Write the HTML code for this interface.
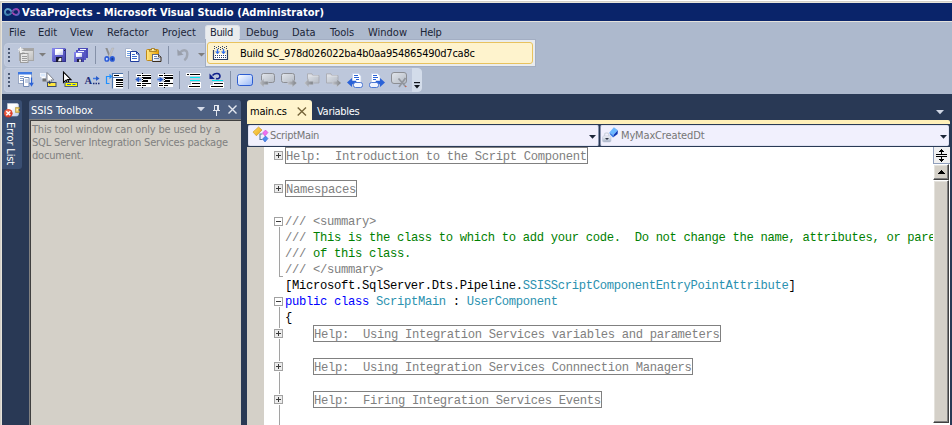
<!DOCTYPE html>
<html>
<head>
<meta charset="utf-8">
<title>VstaProjects - Microsoft Visual Studio (Administrator)</title>
<style>
*{box-sizing:border-box;margin:0;padding:0}
html,body{width:952px;height:425px;overflow:hidden}
body{position:relative;background:#d4d0c8;font-family:"DejaVu Sans Condensed","Liberation Sans",sans-serif;font-size:11px;color:#000}
.abs{position:absolute}
svg{position:absolute;overflow:visible}
#title{left:2px;top:3px;width:950px;height:18px;background:#0a246a}
#title .t{left:20px;top:2px;color:#fff;font-weight:bold;font-size:11px;line-height:16px;white-space:nowrap;letter-spacing:0.02px}
#hl{left:2px;top:21px;width:950px;height:1px;background:#e4e2dc}
#chrome{left:2px;top:22px;width:950px;height:72px;background:#adb9cd}
.mi{top:26px;height:14px;line-height:14px;color:#1b2537;white-space:nowrap}
#buildtab{left:205px;top:25px;width:35px;height:16px;background:#e9ecee;border-radius:3px 3px 0 0;border:1px solid #dde1e9;border-bottom:none}
#drop{left:205px;top:39px;width:331px;height:28px;background:#e9ecee;border:1px solid #a3aec3}
#dropitem{left:207px;top:42px;width:326px;height:22px;background:#fef3cd;border:1px solid #e8c25e;border-radius:3px}
#dropitem .t{left:32px;top:4px;line-height:14px;white-space:nowrap;color:#000;letter-spacing:-0.25px}
.tb{background:#bdc7db;border-radius:4px;border:1px solid #c5cee0}
.sep{width:1px;height:18px;background:#8591a8}
.grip{width:2px;height:2px;background:#4a5872}
#dark{left:2px;top:94px;width:950px;height:331px;background:#293955}
#errtab{left:2px;top:100px;width:20px;height:69px;background:#3a4f73;border-radius:0 3px 3px 0}
#errtab .t{color:#fff;white-space:nowrap;transform-origin:0 0;transform:rotate(90deg);left:15px;top:22px;line-height:13px;letter-spacing:-0.15px}
#tbh{left:29px;top:100px;width:212px;height:20px;background:#4d6082;border-radius:3px 3px 0 0}
#tbh .t{left:2px;top:4px;color:#fff;line-height:14px;white-space:nowrap}
#tbc{left:29px;top:119px;width:212px;height:306px;background:#d4d0c8;border-left:1px solid #808080;border-top:1px solid #808080}
#tbc .in{left:0;top:0;right:0;bottom:0;border-left:1px solid #404040;border-top:1px solid #404040}
#tbc .t{left:2px;top:3px;color:#808080;line-height:13px;white-space:nowrap;letter-spacing:-0.17px}
#tabact{left:247px;top:100px;width:65px;height:21px;background:#fff4cc;border-radius:3px 3px 0 0}
#tabact .t{left:3px;top:5px;line-height:14px;letter-spacing:-0.25px}
#tabvar{left:317px;top:105px;color:#fff;line-height:14px;letter-spacing:-0.3px}
#ystrip{left:247px;top:120px;width:703px;height:4px;background:#fff0b9;border-radius:0 2px 0 0}
.dd{top:125px;height:21px;background:#f1f0fd;border:1px solid #dfe2f1;border-radius:2px;color:#767676}
.dd .t{top:3px;line-height:14px;white-space:nowrap}
#edmargin{left:247px;top:147px;width:17px;height:278px;background:#d4d0c8}
#ed{left:264px;top:147px;width:669px;height:278px;background:#fff;overflow:hidden}
#sb{left:933px;top:147px;width:17px;height:278px;background:#fff}
.btn3d{background:#d4d0c8;border-top:1px solid #fff;border-left:1px solid #fff;border-right:1px solid #404040;border-bottom:1px solid #404040;box-shadow:inset -1px -1px 0 #808080,inset 1px 1px 0 #e4e2dc}
.code{font-family:"Liberation Mono","DejaVu Sans Mono",monospace;font-size:12.2px;letter-spacing:-0.321px;white-space:pre;line-height:16px;height:16px;left:21px}
.g{color:#808080}.gr{color:#008000}.b{color:#0000ff}.c{color:#2b91af}
.box{position:absolute;border:1px solid #808080;height:17px}
.pm{position:absolute;left:10px;width:9px;height:9px;border:1px solid #a2a2a2;background:#fff}
.pm.p{background:#ececec}
.pm i{position:absolute;left:1px;top:3px;width:5px;height:1px;background:#3a3a3a}
.pm b{position:absolute;left:3px;top:1px;width:1px;height:5px;background:#3a3a3a}
.vl{position:absolute;left:15px;width:1px;background:#a2a2a2}
</style>
</head>
<body>
<div class="abs" style="left:0;top:0;width:952px;height:1px;background:#fff"></div>
<div class="abs" style="left:1px;top:2px;width:951px;height:1px;background:#e8e5db"></div>
<div class="abs" style="left:1px;top:2px;width:1px;height:423px;background:#e6e3da"></div>
<div id="title" class="abs"><div class="t abs">VstaProjects - Microsoft Visual Studio (Administrator)</div></div>
<div id="hl" class="abs"></div>
<div id="chrome" class="abs"></div>

<!--TOOLBARS-->
<div class="tb abs" style="left:4px;top:43px;width:215px;height:24px"></div>
<div class="tb abs" style="left:4px;top:68px;width:418px;height:24px;background:#d3dcea;border-color:#d3dcea"></div>
<div class="tb abs" style="left:4px;top:68px;width:408px;height:24px;border-radius:4px 0 0 4px;border-right:none"></div>
<!--ICONS-START-->
<!-- title icon -->
<svg style="left:4px;top:8px" width="16" height="8" viewBox="0 0 16 8">
<defs><linearGradient id="gp" x1="0" y1="0" x2="1" y2="1"><stop offset="0" stop-color="#7a50c8"/><stop offset="0.550" stop-color="#b440ac"/><stop offset="1" stop-color="#3c70c8"/></linearGradient>
<linearGradient id="gt" x1="0" y1="0" x2="0" y2="1"><stop offset="0" stop-color="#64a4cc"/><stop offset="1" stop-color="#3c80b0"/></linearGradient></defs>
<path d="M8 4C6.600 1.900 5.300 1 4 1C2.200 1 1 2.400 1 4C1 5.600 2.200 7 4 7C5.300 7 6.600 6.100 8 4" fill="none" stroke="url(#gt)" stroke-width="1.900"/>
<path d="M8 4C9.400 6.100 10.700 7 12 7C13.800 7 15 5.600 15 4C15 2.400 13.800 1 12 1C10.700 1 9.400 1.900 8 4" fill="none" stroke="url(#gp)" stroke-width="1.900"/>
<path d="M4.500 6.200L11.500 1.800" stroke="#2c5c80" stroke-width="1" opacity="0.800"/>
</svg>

<!-- toolbar grips -->
<div class="grip abs" style="left:8px;top:48px"></div><div class="grip abs" style="left:8px;top:52px"></div><div class="grip abs" style="left:8px;top:56px"></div><div class="grip abs" style="left:8px;top:60px"></div>
<div class="grip abs" style="left:8px;top:73px"></div><div class="grip abs" style="left:8px;top:77px"></div><div class="grip abs" style="left:8px;top:81px"></div><div class="grip abs" style="left:8px;top:85px"></div>

<!-- TB1: new project (disabled) -->
<svg style="left:18px;top:47px" width="16" height="16" viewBox="0 0 16 16">
<defs><linearGradient id="gg1" x1="0" y1="0" x2="1" y2="1"><stop offset="0" stop-color="#fafafa"/><stop offset="1" stop-color="#bcbcbc"/></linearGradient></defs>
<rect x="1.500" y="1.500" width="14" height="12" fill="url(#gg1)" stroke="#a6a6a6"/>
<rect x="2" y="2" width="13" height="2" fill="#a4a4a4"/>
<rect x="2.500" y="6.500" width="7.500" height="9" fill="#e8e8e8" stroke="#9c9c9c"/>
<path d="M4 7.500v-1.500h2.500v1" fill="none" stroke="#8c8c8c" stroke-width="0.800"/>
<g shape-rendering="crispEdges" fill="#9c9c9c"><rect x="4" y="9" width="5" height="1"/><rect x="4" y="11" width="5" height="1"/><rect x="4" y="13" width="5" height="1"/></g>
<path d="M2.500 0v5.500M0 2.700h5.500M0.800 1l3.600 3.600M4.400 1l-3.600 3.600" stroke="#f4f4f4" stroke-width="1"/>
</svg>
<svg style="left:39px;top:53px" width="7" height="4" viewBox="0 0 7 4"><path d="M0 0h7L3.5 3.6z" fill="#7d7d7d"/></svg>

<!-- TB1: save -->
<svg style="left:52px;top:48px" width="14" height="14" viewBox="0 0 14 14">
<defs><linearGradient id="gs" x1="0" y1="0" x2="1" y2="1"><stop offset="0" stop-color="#8a8af0"/><stop offset="1" stop-color="#3a3aa4"/></linearGradient>
<linearGradient id="gw" x1="0" y1="0" x2="1" y2="1"><stop offset="0.400" stop-color="#ffffff"/><stop offset="1" stop-color="#bcc4ec"/></linearGradient></defs>
<path d="M0 0h13l1 1v13H1l-1-1z" fill="url(#gs)"/>
<path d="M13.500 1v12.500h-12" fill="none" stroke="#2c2c84" stroke-width="0.800"/>
<rect x="3" y="1" width="8" height="6" fill="url(#gw)"/>
<rect x="12" y="2" width="1" height="1" fill="#20203c"/>
<rect x="4" y="9" width="6" height="5" fill="#181830"/>
<path d="M7 10.500L9.300 9.700V13.300H6z" fill="#f4f4f4"/>
</svg>

<!-- TB1: save all -->
<svg style="left:74px;top:48px" width="14" height="14" viewBox="0 0 14 14">
<rect x="4" y="0" width="10" height="10" fill="#4a4ab8"/><rect x="6" y="1" width="6" height="1.6" fill="#f0f0ff"/>
<rect x="2" y="2" width="10" height="10" fill="#5656c4"/><rect x="4" y="3" width="6" height="1.6" fill="#f0f0ff"/>
<rect x="0" y="4" width="10" height="10" fill="url(#gs)"/><rect x="2" y="5" width="6" height="4" fill="url(#gw)"/>
<rect x="3" y="11" width="4.5" height="3" fill="#20203c"/><rect x="5" y="11.5" width="2" height="2.2" fill="#e8e8e8"/>
</svg>
<div class="sep abs" style="left:95px;top:46px"></div>

<!-- TB1: cut -->
<svg style="left:104px;top:48px" width="11" height="14" viewBox="0 0 11 14">
<path d="M1.300 0L3.400 0 6.700 8.300 5 9.200z" fill="#8e8e8e"/><path d="M9.900 0L7.800 0 4.500 8.300 6.200 9.200z" fill="#c4c4c4" stroke="#9c9c9c" stroke-width="0.300"/>
<ellipse cx="2.900" cy="10.900" rx="2.600" ry="2.900" fill="#2c5cd8"/><ellipse cx="2.800" cy="11.100" rx="1" ry="1.300" fill="#cfe0ff"/>
<ellipse cx="8.300" cy="10.900" rx="2.600" ry="2.900" fill="#2c5cd8"/><ellipse cx="8.400" cy="11.100" rx="1" ry="1.300" fill="#173c98"/>
</svg>

<!-- TB1: copy -->
<svg style="left:124px;top:48px" width="16" height="14" viewBox="0 0 16 14">
<path d="M1.500 0.500h5l2 2v7h-7z" fill="#fff" stroke="#a8b4cc"/>
<g shape-rendering="crispEdges" fill="#6c9ce0"><rect x="3" y="3" width="3" height="1"/><rect x="3" y="5" width="4" height="1"/><rect x="3" y="7" width="4" height="1"/></g>
<path d="M6.500 3.500h6l2.500 2.500v7.500h-8.500z" fill="#fff" stroke="#1e3c9c"/>
<path d="M12.500 3.500v2.500h2.500" fill="none" stroke="#1e3c9c"/>
<g shape-rendering="crispEdges" fill="#3c6cd0"><rect x="8" y="6" width="3" height="1"/><rect x="8" y="8" width="5" height="1"/><rect x="8" y="10" width="5" height="1"/></g>
</svg>

<!-- TB1: paste -->
<svg style="left:146px;top:48px" width="16" height="14" viewBox="0 0 16 14">
<defs><linearGradient id="gy" x1="0" y1="0" x2="1" y2="0"><stop offset="0" stop-color="#ffe98a"/><stop offset="1" stop-color="#eaa000"/></linearGradient>
<linearGradient id="gpg" x1="0" y1="0" x2="1" y2="1"><stop offset="0.300" stop-color="#ffffff"/><stop offset="1" stop-color="#b4c0d8"/></linearGradient></defs>
<rect x="0.500" y="1.500" width="12" height="11" rx="1" fill="url(#gy)" stroke="#c08818"/>
<path d="M3.500 3.500v-1.500h2v-1.500h3v1.500h2v1.500z" fill="#f8e08a" stroke="#9c7418" stroke-width="0.800"/>
<rect x="6" y="1.200" width="1.200" height="1" fill="#fff8d8"/>
<path d="M6.500 6.500h6l2.500 2.500v4.500h-8.500z" fill="url(#gpg)" stroke="#3a2c1c"/>
<g shape-rendering="crispEdges" fill="#6c84b4"><rect x="8" y="8" width="3" height="1"/><rect x="8" y="10" width="5" height="1"/></g>
<path d="M6.500 13v-6.500h6l2 2" fill="none" stroke="#5c6c8c"/>
<path d="M12.500 6.500v2.500h2.500" fill="none" stroke="#3a2c1c" stroke-width="0.800"/>
</svg>
<div class="sep abs" style="left:168px;top:46px"></div>

<!-- TB1: undo (disabled) -->
<svg style="left:177px;top:48px" width="12" height="13" viewBox="0 0 12 13">
<path d="M3 4.500C6.500 0.800 10.300 2.200 10.300 6C10.300 9 9 11 7.300 12.200" fill="none" stroke="#a0a6b2" stroke-width="2.400"/>
<path d="M0.200 1.200L0.600 7.800 6.600 6.800z" fill="#989eaa"/>
</svg>
<svg style="left:198px;top:53px" width="7" height="4" viewBox="0 0 7 4"><path d="M0 0h7L3.500 3.600z" fill="#7d7d7d"/></svg>
<!-- TB2: icon1 -->
<svg style="left:18px;top:72px" width="16" height="15" viewBox="0 0 16 15">
<rect x="0.500" y="0.500" width="13" height="11" fill="#fff" stroke="#9aa8c4"/>
<rect x="0" y="0" width="14" height="2.500" fill="#3c78e4"/>
<path d="M2 4.500h4M2 6.500h4M2 8.500h3" stroke="#8aa0c8" stroke-width="1"/>
<path d="M6.500 5.500h4.500v9h-5.500v-8z" fill="#fff" stroke="#7088b4"/>
<path d="M7 8h3M7 10h3" stroke="#8aa0c8" stroke-width="1"/>
<path d="M13.500 5.500v6" stroke="#2a62d8" stroke-width="1.300"/><path d="M11.200 10.800h4.600l-2.300 4z" fill="#2a62d8"/>
</svg>
<!-- TB2: icon2 -->
<svg style="left:40px;top:72px" width="17" height="15" viewBox="0 0 17 15">
<rect x="0.500" y="1.500" width="5" height="3" fill="#d8e8fc" stroke="#f4f8ff" stroke-width="0.800"/>
<rect x="1.500" y="5" width="4" height="1.500" fill="#fff"/>
<rect x="2.500" y="6.500" width="3.500" height="3" fill="#707070"/>
<path d="M7 0.500v10l2.300-2 1.500 3.300 1.600-0.700-1.500-3.200h3z" fill="#fff" stroke="#6c7078" stroke-width="0.800"/>
<rect x="7.500" y="10.500" width="8.500" height="4" fill="#ffe640" stroke="#3c4c6c"/>
<path d="M9.800 9v3" stroke="#2c3c5c" stroke-width="1.200"/>
</svg>
<!-- TB2: icon3 -->
<svg style="left:62px;top:71px" width="17" height="16" viewBox="0 0 17 16">
<path d="M1.500 1v10.500l2.600-2.300 1.700 3.600 1.500-0.700-1.700-3.500h3.400z" fill="#fff" stroke="#000" stroke-width="1.100"/>
<rect x="3" y="11.500" width="12.500" height="4" fill="#ffff00" stroke="#4c5c74"/>
<path d="M5 13.500h4M10.500 13.500h3" stroke="#2a62d8" stroke-width="1"/>
</svg>
<!-- TB2: icon4 A-> -->
<svg style="left:85px;top:75px" width="15" height="10" viewBox="0 0 15 10">
<text x="-0.500" y="8.500" font-family="Liberation Serif,serif" font-weight="bold" font-size="10.500" fill="#1c2c78">A</text>
<path d="M8 3.500h4" stroke="#3c78e4" stroke-width="1.500"/><path d="M11 1l3.500 2.500L11 6z" fill="#2a5cc8"/>
<path d="M8 8.500h1.500M10.500 8.500h1.500M13 8.500h1.500" stroke="#1c2c78" stroke-width="1.400"/>
</svg>
<!-- TB2: icon5 -->
<svg style="left:106px;top:73px" width="17" height="16" viewBox="0 0 17 16">
<path d="M4 3.500h-3.500v7h3" fill="none" stroke="#1e90ff" stroke-width="1.200"/><path d="M3.500 0.800l3 2.700-3 2.700z" fill="#1e90ff"/>
<rect x="6.500" y="0.500" width="10.500" height="15" fill="#fff"/><path d="M6.500 15.500v-15h10.500" fill="none" stroke="#4a72a8" stroke-width="1.200"/>
<g shape-rendering="crispEdges"><rect x="8" y="2" width="5" height="1" fill="#000"/><rect x="7" y="4" width="10" height="1" fill="#5a80b4"/>
<rect x="10" y="6" width="7" height="1.500" fill="#000"/><rect x="10" y="9" width="7" height="1" fill="#000"/><rect x="10" y="11" width="7" height="1" fill="#000"/><rect x="10" y="13" width="7" height="1" fill="#000"/></g>
</svg>
<div class="sep abs" style="left:128px;top:71px"></div>
<!-- TB2: outdent -->
<svg style="left:135px;top:72px" width="16" height="16" viewBox="0 0 16 16" shape-rendering="crispEdges">
<g fill="#fff"><rect x="1" y="2" width="6" height="3"/><rect x="7" y="2" width="9" height="13"/><rect x="1" y="10" width="6" height="5"/></g>
<g fill="#000"><rect x="2" y="3" width="4" height="1"/><rect x="8" y="3" width="8" height="1"/><rect x="8" y="5" width="8" height="2"/><rect x="8" y="8" width="5" height="2"/><rect x="2" y="11" width="4" height="1"/><rect x="8" y="11" width="8" height="1"/><rect x="2" y="13" width="4" height="1"/><rect x="8" y="13" width="3" height="1"/>
<rect x="7" y="1" width="1" height="1"/><rect x="7" y="3" width="1" height="1"/><rect x="7" y="5" width="1" height="1"/><rect x="7" y="7" width="1" height="1"/><rect x="7" y="9" width="1" height="1"/><rect x="7" y="11" width="1" height="1"/><rect x="7" y="13" width="1" height="1"/><rect x="7" y="15" width="1" height="1"/></g>
<g shape-rendering="auto"><path d="M2.500 7.500h3.500" stroke="#3c78e4" stroke-width="1.600"/><path d="M4 4.800L0.200 7.500 4 10.200z" fill="#2a5cc8"/></g>
</svg>
<!-- TB2: indent -->
<svg style="left:157px;top:72px" width="16" height="16" viewBox="0 0 16 16" shape-rendering="crispEdges">
<g fill="#fff"><rect x="1" y="2" width="6" height="3"/><rect x="7" y="2" width="9" height="13"/><rect x="1" y="10" width="6" height="5"/></g>
<g fill="#000"><rect x="2" y="3" width="4" height="1"/><rect x="8" y="3" width="8" height="1"/><rect x="8" y="5" width="8" height="2"/><rect x="8" y="8" width="5" height="2"/><rect x="2" y="11" width="4" height="1"/><rect x="8" y="11" width="8" height="1"/><rect x="2" y="13" width="4" height="1"/><rect x="8" y="13" width="3" height="1"/>
<rect x="7" y="1" width="1" height="1"/><rect x="7" y="3" width="1" height="1"/><rect x="7" y="5" width="1" height="1"/><rect x="7" y="7" width="1" height="1"/><rect x="7" y="9" width="1" height="1"/><rect x="7" y="11" width="1" height="1"/><rect x="7" y="13" width="1" height="1"/><rect x="7" y="15" width="1" height="1"/></g>
<g shape-rendering="auto"><path d="M0.300 7.500h3.500" stroke="#3c78e4" stroke-width="1.600"/><path d="M2.600 4.800L6.400 7.500 2.600 10.200z" fill="#2a5cc8"/></g>
</svg>
<div class="sep abs" style="left:179px;top:71px"></div>
<!-- TB2: comment -->
<svg style="left:186px;top:73px" width="15" height="15" viewBox="0 0 15 15" shape-rendering="crispEdges">
<g fill="#fff"><rect x="0" y="0" width="15" height="3"/><rect x="5" y="9" width="10" height="3"/><rect x="2" y="12" width="13" height="3"/></g>
<g fill="#000"><rect x="1" y="1" width="2" height="1"/><rect x="4" y="1" width="10" height="1"/><rect x="6" y="10" width="8" height="1"/><rect x="3" y="13" width="11" height="1"/></g>
<g fill="#00e8f0"><rect x="4" y="4" width="10" height="1"/><rect x="4" y="7" width="10" height="1"/></g>
</svg>
<!-- TB2: uncomment -->
<svg style="left:209px;top:72px" width="15" height="16" viewBox="0 0 15 16">
<g fill="#fff" shape-rendering="crispEdges"><rect x="4" y="10" width="11" height="3"/><rect x="1" y="13" width="14" height="3"/></g>
<path d="M3.500 3.500C6 0.500 11 1 11 4.300C11 6.500 8.500 7 7 6.500" fill="none" stroke="#10208c" stroke-width="1.600"/>
<path d="M0.500 1.500v5.500h5.300z" fill="#10208c"/>
<g shape-rendering="crispEdges"><rect x="3" y="8" width="11" height="1" fill="#00e8f0"/><rect x="5" y="11" width="9" height="1" fill="#000"/><rect x="2" y="14" width="12" height="1" fill="#000"/></g>
</svg>
<div class="sep abs" style="left:230px;top:71px"></div>
<!-- TB2: bookmark -->
<svg style="left:237px;top:74px" width="16" height="12" viewBox="0 0 16 12">
<defs><linearGradient id="gb" x1="0" y1="0" x2="1" y2="1"><stop offset="0" stop-color="#ffffff"/><stop offset="1" stop-color="#98b8f8"/></linearGradient></defs>
<rect x="0.500" y="0.500" width="15" height="11" rx="2.200" fill="url(#gb)" stroke="#2c5cd0" stroke-width="1"/>
</svg>
<!-- TB2: prev bookmark (disabled) -->
<svg style="left:259px;top:73px" width="16" height="14" viewBox="0 0 16 14">
<defs><linearGradient id="gd" x1="0" y1="0" x2="1" y2="1"><stop offset="0" stop-color="#e2e6ec"/><stop offset="1" stop-color="#b4bac4"/></linearGradient>
<linearGradient id="ga" x1="0" y1="0" x2="1" y2="0"><stop offset="0" stop-color="#bcbec4"/><stop offset="1" stop-color="#7e8288"/></linearGradient></defs>
<rect x="2.500" y="0.500" width="13" height="9" rx="2" fill="url(#gd)" stroke="#8c8e94" stroke-width="1"/>
<path d="M0.200 10l4.600-4.200v2.400h4.400v3.600h-4.400v2.400z" fill="url(#ga)" stroke="#c8ced8" stroke-width="0.500"/>
</svg>
<!-- TB2: next bookmark (disabled) -->
<svg style="left:281px;top:73px" width="16" height="14" viewBox="0 0 16 14">
<rect x="0.500" y="0.500" width="13" height="9" rx="2" fill="url(#gd)" stroke="#8c8e94" stroke-width="1"/>
<path d="M15.800 10l-4.600-4.200v2.400h-4.400v3.600h4.400v2.400z" fill="url(#ga)" stroke="#c8ced8" stroke-width="0.500"/>
</svg>
<!-- TB2: prev folder (disabled) -->
<svg style="left:304px;top:73px" width="16" height="14" viewBox="0 0 16 14">
<path d="M3.500 0.800h4.500l0.800 1.700h6.200v7.500h-11.500z" fill="url(#gd)" stroke="#a4a6ac" stroke-width="0.800"/>
<path d="M4 3h10.500" stroke="#e4e6ea" stroke-width="0.800"/>
<path d="M0.200 10l4.600-4.200v2.400h4.400v3.600h-4.400v2.400z" fill="url(#ga)" stroke="#c8ced8" stroke-width="0.500"/>
</svg>
<!-- TB2: next folder (disabled) -->
<svg style="left:326px;top:73px" width="16" height="14" viewBox="0 0 16 14">
<path d="M0.500 0.800h4.500l0.800 1.700h6.200v7.500h-11.500z" fill="url(#gd)" stroke="#a4a6ac" stroke-width="0.800"/>
<path d="M1 3h10.500" stroke="#e4e6ea" stroke-width="0.800"/>
<path d="M15.300 10l-4.600-4.200v2.400h-3.900v3.600h3.900v2.400z" fill="url(#ga)" stroke="#c8ced8" stroke-width="0.500"/>
</svg>
<!-- TB2: prev doc -->
<svg style="left:347px;top:73px" width="16" height="15" viewBox="0 0 16 15">
<path d="M5.500 0.500h6l2.500 2.500v6.500h-8.500z" fill="#fff" stroke="#c4d0e8" stroke-width="0.800"/>
<g shape-rendering="crispEdges" fill="#2a62d8"><rect x="7" y="2" width="4" height="1"/><rect x="7" y="4" width="5" height="1"/><rect x="9" y="6" width="3" height="1"/></g>
<path d="M0 9.500l5-4.500v2.700h4.300v3.600h-4.300v2.700z" fill="#2a62d8"/>
<rect x="6.500" y="9.500" width="9" height="5" rx="2" fill="#f0f4ff" stroke="#3c6cd0" stroke-width="0.900"/>
</svg>
<!-- TB2: next doc -->
<svg style="left:369px;top:73px" width="16" height="15" viewBox="0 0 16 15">
<path d="M2.500 0.500h6l2.500 2.500v6.500h-8.500z" fill="#fff" stroke="#c4d0e8" stroke-width="0.800"/>
<g shape-rendering="crispEdges" fill="#2a62d8"><rect x="4" y="2" width="4" height="1"/><rect x="4" y="4" width="5" height="1"/><rect x="4" y="6" width="3" height="1"/></g>
<path d="M16 9.500l-5-4.500v2.700h-4.300v3.600h4.300v2.700z" fill="#2a62d8"/>
<rect x="0.500" y="9.500" width="9" height="5" rx="2" fill="#f0f4ff" stroke="#3c6cd0" stroke-width="0.900"/>
</svg>
<!-- TB2: clear bookmarks (disabled) -->
<svg style="left:391px;top:72px" width="16" height="16" viewBox="0 0 16 16">
<rect x="0.500" y="0.500" width="15" height="11" rx="2.500" fill="url(#gd)" stroke="#8c8e94" stroke-width="1"/>
<path d="M7.500 6.500l7.500 8.500M14.500 6l-6.500 9" stroke="#92969e" stroke-width="1.700"/>
<rect x="14.300" y="14" width="1" height="1" fill="#e05030"/>
</svg>
<!-- TB2: overflow -->
<svg style="left:414px;top:82px" width="7" height="7" viewBox="0 0 7 7"><path d="M0 0h6v1.200h-6z" fill="#10141c"/><path d="M0 3h6L3 6.500z" fill="#10141c"/></svg>

<!--ICONS-END-->

<div id="buildtab" class="abs"></div>
<div id="drop" class="abs"></div>
<div class="abs" style="left:206px;top:39px;width:33px;height:2px;background:#e9ecee"></div>
<div id="dropitem" class="abs"><div class="t abs">Build SC_978d026022ba4b0aa954865490d7ca8c</div></div>

<!-- Build dropdown icon -->
<svg style="left:213px;top:45px" width="16" height="15" viewBox="0 0 16 15">
<rect x="1" y="9" width="13" height="5" fill="#fff"/>
<path d="M0.500 5v9.500h14v-9.500" fill="none" stroke="#2b3f66" stroke-width="1.200"/>
<g fill="#2b3f66"><rect x="1" y="1" width="1" height="1"/><rect x="5" y="1" width="1" height="1"/><rect x="9" y="1" width="1" height="1"/><rect x="13" y="1" width="1" height="1"/><rect x="3" y="2" width="1" height="1"/><rect x="7" y="2" width="1" height="1"/><rect x="11" y="2" width="1" height="1"/><rect x="1" y="3" width="1" height="1"/><rect x="5" y="3" width="1" height="1"/><rect x="9" y="3" width="1" height="1"/><rect x="13" y="3" width="1" height="1"/><rect x="7" y="4" width="1" height="1"/>
<rect x="2" y="10" width="1" height="1"/><rect x="4" y="10" width="1" height="1"/><rect x="6" y="10" width="1" height="1"/><rect x="8" y="10" width="1" height="1"/><rect x="10" y="10" width="1" height="1"/><rect x="12" y="10" width="1" height="1"/>
<rect x="2" y="12" width="1" height="1"/><rect x="4" y="12" width="1" height="1"/><rect x="6" y="12" width="1" height="1"/><rect x="8" y="12" width="1" height="1"/><rect x="10" y="12" width="1" height="1"/><rect x="12" y="12" width="1" height="1"/></g>
<path d="M4.500 4v3M10.500 4v3" stroke="#2a6cf0" stroke-width="1.300"/><path d="M2 6.500h5L4.500 9.300zM8 6.500h5L10.500 9.300z" fill="#2a6cf0"/>
</svg>
<div class="mi abs" style="left:9px">File</div>
<div class="mi abs" style="left:38px">Edit</div>
<div class="mi abs" style="left:70px">View</div>
<div class="mi abs" style="left:107px">Refactor</div>
<div class="mi abs" style="left:162px">Project</div>
<div class="mi abs" style="left:210px;letter-spacing:-0.4px">Build</div>
<div class="mi abs" style="left:246px">Debug</div>
<div class="mi abs" style="left:292px">Data</div>
<div class="mi abs" style="left:330px">Tools</div>
<div class="mi abs" style="left:368px">Window</div>
<div class="mi abs" style="left:420px;letter-spacing:-0.3px">Help</div>

<div id="dark" class="abs"></div>
<div id="errtab" class="abs"><div class="t abs">Error List</div></div>
<div id="tbh" class="abs"><div class="t abs">SSIS Toolbox</div></div>
<div id="tbc" class="abs"><div class="in abs"></div><div class="t abs">This tool window can only be used by a<br>SQL Server Integration Services package<br>document.</div></div>

<div id="tabact" class="abs"><div class="t abs">main.cs</div></div>
<div id="tabvar" class="abs">Variables</div>
<div id="ystrip" class="abs"></div>
<div class="dd abs" style="left:248px;width:351px;border-right-color:#8893ad"><div class="t abs" style="left:21px;letter-spacing:-0.33px">ScriptMain</div></div>
<div class="dd abs" style="left:600px;width:349px;border-left-color:#8893ad"><div class="t abs" style="left:20px;letter-spacing:-0.15px">MyMaxCreatedDt</div></div>

<div id="edmargin" class="abs"></div>
<div id="ed" class="abs">
<div class="box" style="left:21px;top:0px;width:303px"></div>
<div class="box" style="left:21px;top:33px;width:72px"></div>
<div class="box" style="left:49px;top:178px;width:408px"></div>
<div class="box" style="left:49px;top:211px;width:380px"></div>
<div class="box" style="left:49px;top:244px;width:289px"></div>
<div class="vl" style="top:80px;height:50px"></div>
<div class="vl" style="top:129px;height:1px;width:4px"></div>
<div class="vl" style="top:160px;height:21px"></div>
<div class="vl" style="top:192px;height:22px"></div>
<div class="vl" style="top:225px;height:22px"></div>
<div class="vl" style="top:258px;height:20px"></div>
<div class="pm p" style="top:4px"><i></i><b></b></div>
<div class="pm p" style="top:37px"><i></i><b></b></div>
<div class="pm" style="top:70px"><i></i></div>
<div class="pm" style="top:150px"><i></i></div>
<div class="pm p" style="top:182px"><i></i><b></b></div>
<div class="pm p" style="top:215px"><i></i><b></b></div>
<div class="pm p" style="top:248px"><i></i><b></b></div>
<div class="code abs g" style="top:2px;left:22px">Help:  Introduction to the Script Component</div>
<div class="code abs g" style="top:35px;left:22px">Namespaces</div>
<div class="code abs g" style="top:67px">/// &lt;summary&gt;</div>
<div class="code abs g" style="top:83px">/// <span class="gr">This is the class to which to add your code.  Do not change the name, attributes, or parent</span></div>
<div class="code abs g" style="top:99px">/// <span class="gr">of this class.</span></div>
<div class="code abs g" style="top:115px">/// &lt;/summary&gt;</div>
<div class="code abs" style="top:131px">[Microsoft.SqlServer.Dts.Pipeline.<span class="c">SSISScriptComponentEntryPointAttribute</span>]</div>
<div class="code abs" style="top:147px"><span class="b">public</span> <span class="b">class</span> <span class="c">ScriptMain</span> : <span class="c">UserComponent</span></div>
<div class="code abs" style="top:163px">{</div>
<div class="code abs g" style="top:180px;left:50px">Help:  Using Integration Services variables and parameters</div>
<div class="code abs g" style="top:213px;left:50px">Help:  Using Integration Services Connnection Managers</div>
<div class="code abs g" style="top:246px;left:50px">Help:  Firing Integration Services Events</div>
</div>
<div id="sb" class="abs"></div>
<!--SCROLL-START-->
<!-- Error list icon -->
<svg style="left:4px;top:102px" width="17" height="16" viewBox="0 0 17 16">
<defs><linearGradient id="ge" x1="0" y1="0" x2="1" y2="1"><stop offset="0.400" stop-color="#ffffff"/><stop offset="1" stop-color="#b8c8e8"/></linearGradient>
<radialGradient id="gr" cx="0.400" cy="0.350" r="0.700"><stop offset="0" stop-color="#f87858"/><stop offset="1" stop-color="#d42c18"/></radialGradient></defs>
<path d="M3.500 1.500h9.500q1.500 0 1.500 1.500v9q0 2-2 2h-9z" fill="url(#ge)" stroke="#d0d8e8" stroke-width="0.600"/>
<path d="M11.500 5.500h3.800v1.500h-1v2h1v1.500h-3.800z" fill="#e8c860" stroke="#b09030" stroke-width="0.600"/>
<rect x="12.600" y="7" width="1.200" height="1.600" fill="#fffbe0"/>
<circle cx="4.300" cy="11.300" r="4.300" fill="url(#gr)"/>
<path d="M2.300 9.300l4 4M6.300 9.300l-4 4" stroke="#fff" stroke-width="1.400"/>
</svg>
<!-- panel header icons -->
<svg style="left:197px;top:107px" width="8" height="5" viewBox="0 0 8 5"><path d="M0 0h8L4 4.300z" fill="#d4dae8"/></svg>
<svg style="left:212px;top:104px" width="9" height="12" viewBox="0 0 9 12" shape-rendering="crispEdges">
<path d="M2.500 1.500h4v5h-4z" fill="none" stroke="#e4e8f0" stroke-width="1"/><path d="M5.500 1.500v5" stroke="#e4e8f0" stroke-width="1"/>
<path d="M1 6.500h7" stroke="#e4e8f0" stroke-width="1"/><path d="M4.500 7v4.500" stroke="#e4e8f0" stroke-width="1"/>
</svg>
<svg style="left:228px;top:105px" width="9" height="9" viewBox="0 0 9 9"><path d="M0.500 0.500l8 8M8.500 0.500l-8 8" stroke="#e4e8f0" stroke-width="1.400"/></svg>
<!-- tab close -->
<svg style="left:297px;top:107px" width="10" height="9" viewBox="0 0 10 9"><path d="M0.700 0.500l8.300 8M9 0.500l-8.300 8" stroke="#75643a" stroke-width="1.350"/></svg>
<!-- tab overflow -->
<svg style="left:936px;top:110px" width="8" height="5" viewBox="0 0 8 5"><path d="M0 0h8L4 4.200z" fill="#d0d6e4"/></svg>
<!-- dd arrows -->
<svg style="left:589px;top:135px" width="7" height="4" viewBox="0 0 7 4"><path d="M0 0h7L3.500 3.700z" fill="#1b2537"/></svg>
<svg style="left:940px;top:135px" width="7" height="4" viewBox="0 0 7 4"><path d="M0 0h7L3.500 3.700z" fill="#1b2537"/></svg>
<!-- class icon -->
<svg style="left:252px;top:126px" width="17" height="17" viewBox="0 0 17 17">
<defs><linearGradient id="gc1" x1="0" y1="0" x2="1" y2="1"><stop offset="0" stop-color="#ffe070"/><stop offset="1" stop-color="#e8a410"/></linearGradient></defs>
<path d="M8 7.500v6h2.500M8 8h2.500" fill="none" stroke="#5c7c9c" stroke-width="1.100"/>
<path d="M1 6.100L6.500 1 10 4 4.400 9.800z" fill="url(#gc1)" stroke="#c89018" stroke-width="0.600"/>
<path d="M10.500 7L13.500 4 16 6.500 13 10z" fill="#f070f0" stroke="#c040c0" stroke-width="0.500"/>
<path d="M10.500 13L13.500 10 16 12.500 13 16z" fill="#4c8cf0" stroke="#2050c0" stroke-width="0.500"/>
</svg>
<!-- field icon -->
<svg style="left:602px;top:126px" width="17" height="17" viewBox="0 0 17 17">
<defs><linearGradient id="gl" x1="0" y1="0" x2="0" y2="1"><stop offset="0" stop-color="#f4f6fa"/><stop offset="1" stop-color="#a4b0c4"/></linearGradient></defs>
<path d="M7.300 6.400L11.900 1.200 15.900 4.300 11.500 9z" fill="#6cb8ff"/>
<path d="M11.500 9L15.900 4.300 15.600 7.900 11 11.600z" fill="#0c34b4"/>
<path d="M7.300 6.400L11.500 9 11 11.600 8.200 8.800z" fill="#3c80e8"/>
<path d="M2.500 10.500v-1.500a2.200 2.200 0 0 1 4.400 0v1.500" fill="none" stroke="#d0d6e0" stroke-width="1.300"/>
<rect x="0.500" y="10" width="8.500" height="6" rx="1.500" fill="url(#gl)" stroke="#c0c8d8" stroke-width="0.600"/>
<path d="M3 12h4L5 14z" fill="#303848"/>
</svg>
<div class="abs" style="left:933px;top:147px;width:17px;height:17px;background:#f0f0f1;border-left:1px solid #8f9ebb;border-bottom:1px solid #8f9ebb"></div>
<svg style="left:935px;top:148px" width="12" height="14" viewBox="0 0 12 14" shape-rendering="crispEdges">
<g fill="#000"><rect x="6" y="1" width="1" height="5"/><rect x="6" y="9" width="1" height="5"/><rect x="1" y="6" width="11" height="1"/><rect x="1" y="8" width="11" height="1"/>
<rect x="5" y="2" width="3" height="1"/><rect x="4" y="3" width="5" height="1"/><rect x="4" y="11" width="5" height="1"/><rect x="5" y="12" width="3" height="1"/></g>
</svg>
<div class="btn3d abs" style="left:933px;top:164px;width:16px;height:16px"></div>
<svg style="left:938px;top:170px" width="7" height="4" viewBox="0 0 7 4" shape-rendering="crispEdges"><g fill="#000"><rect x="3" y="0" width="1" height="1"/><rect x="2" y="1" width="3" height="1"/><rect x="1" y="2" width="5" height="1"/><rect x="0" y="3" width="7" height="1"/></g></svg>
<div class="btn3d abs" style="left:933px;top:180px;width:16px;height:243px"></div>
<!--SCROLL-END-->
</body>
</html>
